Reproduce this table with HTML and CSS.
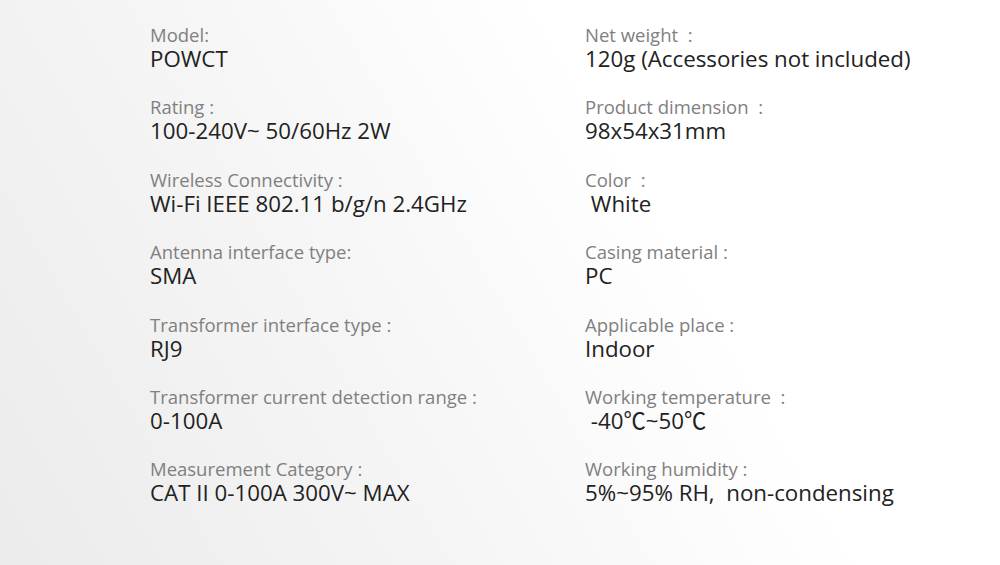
FILE: index.html
```html
<!DOCTYPE html>
<html>
<head>
<meta charset="utf-8">
<link rel="stylesheet" href="styles.css">
</head>
<body>
<div class="page">
  <div class="grid">
    <div class="item"><div class="label">Model:</div><div class="value">POWCT</div></div>
    <div class="item"><div class="label">Net weight&nbsp; :</div><div class="value">120g (Accessories not included)</div></div>
    <div class="item"><div class="label">Rating :</div><div class="value">100-240V~ 50/60Hz 2W</div></div>
    <div class="item"><div class="label">Product dimension&nbsp; :</div><div class="value">98x54x31mm</div></div>
    <div class="item"><div class="label">Wireless Connectivity :</div><div class="value">Wi-Fi IEEE 802.11 b/g/n 2.4GHz</div></div>
    <div class="item"><div class="label">Color&nbsp; :</div><div class="value">&nbsp;White</div></div>
    <div class="item"><div class="label">Antenna interface type:</div><div class="value">SMA</div></div>
    <div class="item"><div class="label">Casing material :</div><div class="value">PC</div></div>
    <div class="item"><div class="label">Transformer interface type :</div><div class="value">RJ9</div></div>
    <div class="item"><div class="label">Applicable place :</div><div class="value">Indoor</div></div>
    <div class="item"><div class="label">Transformer current detection range :</div><div class="value">0-100A</div></div>
    <div class="item"><div class="label">Working temperature&nbsp; :</div><div class="value">&nbsp;-40℃~50℃</div></div>
    <div class="item"><div class="label">Measurement Category :</div><div class="value">CAT II 0-100A 300V~ MAX</div></div>
    <div class="item"><div class="label">Working humidity :</div><div class="value">5%~95% RH,&nbsp; non-condensing</div></div>
  </div>
</div>
</body>
</html>
```

FILE: styles.css
```css
html, body {
  margin: 0;
  padding: 0;
}
body {
  width: 1000px;
  height: 565px;
  overflow: hidden;
  font-family: "Open Sans", "Noto Sans CJK SC", sans-serif;
  background: linear-gradient(60deg, #ebebeb 0%, #f5f5f5 35%, #ffffff 65%, #ffffff 100%);
}
.page {
  padding: 23px 0 0 150px;
}
.grid {
  display: grid;
  grid-template-columns: 435px 400px;
  row-gap: 24.4px;
}
.item {
  display: flex;
  flex-direction: column;
}
.label {
  font-size: 18.5px;
  line-height: 23px;
  color: #808080;
  white-space: pre;
}
.value {
  font-size: 22.3px;
  line-height: 25px;
  color: #222222;
  white-space: pre;
}
```
